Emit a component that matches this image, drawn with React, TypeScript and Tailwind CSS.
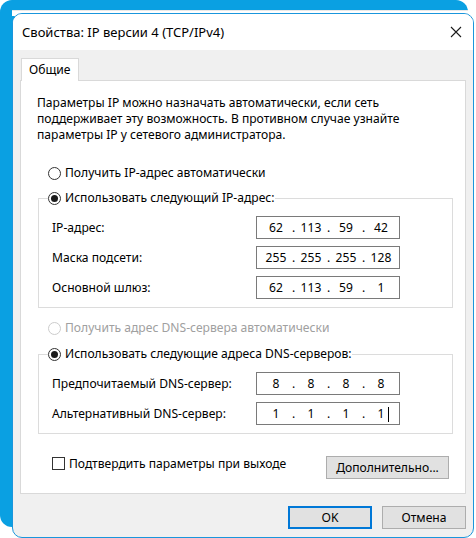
import React from "react";

const font = { fontFamily: '"Noto Sans", "Open Sans", sans-serif' };

function Radio({ checked, disabled, label }: { checked?: boolean; disabled?: boolean; label: string }) {
  return (
    <div className={`flex items-center h-[16px] ${disabled ? "text-[#a0a0a0]" : "text-black"}`}>
      <span
        className={`w-[13px] h-[13px] rounded-full border bg-white flex items-center justify-center mr-[4px] ${
          disabled ? "border-[#cccccc]" : "border-[#333333]"
        }`}
      >
        {checked && <span className="w-[7px] h-[7px] rounded-full bg-[#1b1b1b]" />}
      </span>
      <span>{label}</span>
    </div>
  );
}

function IpBox({ parts, caret }: { parts: string[]; caret?: boolean }) {
  return (
    <div className="w-[144px] h-[23px] border border-[#7a7a7a] bg-white flex items-center pl-[4px]">
      {parts.map((p, i) => (
        <React.Fragment key={i}>
          <span className="w-[30px] text-center relative">
            {p}
            {caret && i === parts.length - 1 && (
              <span className="absolute top-[1px] right-[7px] w-px h-[15px] bg-black" />
            )}
          </span>
          {i < parts.length - 1 && <span className="w-[5px] text-center">.</span>}
        </React.Fragment>
      ))}
    </div>
  );
}

function Row({ label, parts, caret }: { label: string; parts: string[]; caret?: boolean }) {
  return (
    <div className="flex items-center justify-between">
      <span>{label}</span>
      <IpBox parts={parts} caret={caret} />
    </div>
  );
}

export default function App() {
  return (
    <div className="relative w-[476px] h-[538px] bg-white overflow-hidden text-[12.1px] leading-[16px]" style={font}>
      {/* window behind */}
      <div className="absolute left-0 top-0 w-[468px] h-[527px] rounded-[12px] bg-[#0aa0e2]">
        <div className="absolute left-[12px] right-0 top-[10px] h-[6px] bg-white border-t border-[#e8e8e8]" />
      </div>

      {/* dialog */}
      <div className="absolute left-[12px] top-[13px] w-[462px] h-[525px] rounded-[10px] border border-[#1a96dc] bg-[#f0f0f0] overflow-hidden flex flex-col">
        <div className="h-[36px] bg-white flex items-center justify-between pl-[9px] pr-[8px] shrink-0">
          <span className="text-[13px] text-black">Свойства: IP версии 4 (TCP/IPv4)</span>
          <svg width="14" height="14" viewBox="0 0 14 14" className="mr-[2px]">
            <path d="M2 2 L12 12 M12 2 L2 12" stroke="#1b1b1b" strokeWidth="1.1" />
          </svg>
        </div>

        <div className="px-[7px] pt-[8px] flex flex-col">
          {/* tab */}
          <div className="flex">
            <div className="ml-[1px] w-[58px] h-[23px] bg-white border border-b-0 border-[#d9d9d9] px-[7px] flex items-center -mb-px relative">
              Общие
            </div>
          </div>

          {/* panel */}
          <div className="h-[414px] bg-white border border-[#d9d9d9] pl-[16px] pr-[12px] pt-[14px] flex flex-col">
            <p className="text-black">
              Параметры IP можно назначать автоматически, если сеть
              <br />
              поддерживает эту возможность. В противном случае узнайте
              <br />
              параметры IP у сетевого администратора.
            </p>

            <div className="mt-[22px] pl-[11px]">
              <Radio label="Получить IP-адрес автоматически" />
            </div>

            <fieldset className="mt-[9px] ml-[1px] border border-[#dcdcdc] pl-[13px] pr-[52px] pb-[8px]">
              <legend className="-ml-[4px] px-0 bg-white">
                <Radio checked label="Использовать следующий IP-адрес:" />
              </legend>
              <div className="flex flex-col gap-[7px] mt-[10px]">
                <Row label="IP-адрес:" parts={["62", "113", "59", "42"]} />
                <Row label="Маска подсети:" parts={["255", "255", "255", "128"]} />
                <Row label="Основной шлюз:" parts={["62", "113", "59", "1"]} />
              </div>
            </fieldset>

            <div className="mt-[12px] pl-[11px]">
              <Radio disabled label="Получить адрес DNS-сервера автоматически" />
            </div>

            <fieldset className="mt-[10px] ml-[1px] border border-[#dcdcdc] pl-[13px] pr-[52px] pb-[8px]">
              <legend className="-ml-[4px] px-0 bg-white">
                <Radio checked label="Использовать следующие адреса DNS-серверов:" />
              </legend>
              <div className="flex flex-col gap-[7px] mt-[10px]">
                <Row label="Предпочитаемый DNS-сервер:" parts={["8", "8", "8", "8"]} />
                <Row label="Альтернативный DNS-сервер:" parts={["1", "1", "1", "1"]} caret />
              </div>
            </fieldset>

            <div className="mt-[22px] flex items-center justify-between pl-[15px] pr-[4px]">
              <div className="flex items-center -mt-[8px]">
                <span className="w-[13px] h-[13px] border border-[#333333] bg-white mr-[4px]" />
                <span>Подтвердить параметры при выходе</span>
              </div>
              <button className="w-[123px] h-[23px] bg-[#e1e1e1] border border-[#adadad] text-black">
                Дополнительно...
              </button>
            </div>
          </div>

          {/* footer buttons */}
          <div className="flex justify-end gap-[10px] mt-[12px]">
            <button className="w-[84px] h-[23px] bg-[#e1e1e1] border-2 border-[#0078d7] text-black">OK</button>
            <button className="w-[84px] h-[23px] bg-[#e1e1e1] border border-[#adadad] text-black">Отмена</button>
          </div>
        </div>
      </div>
    </div>
  );
}
